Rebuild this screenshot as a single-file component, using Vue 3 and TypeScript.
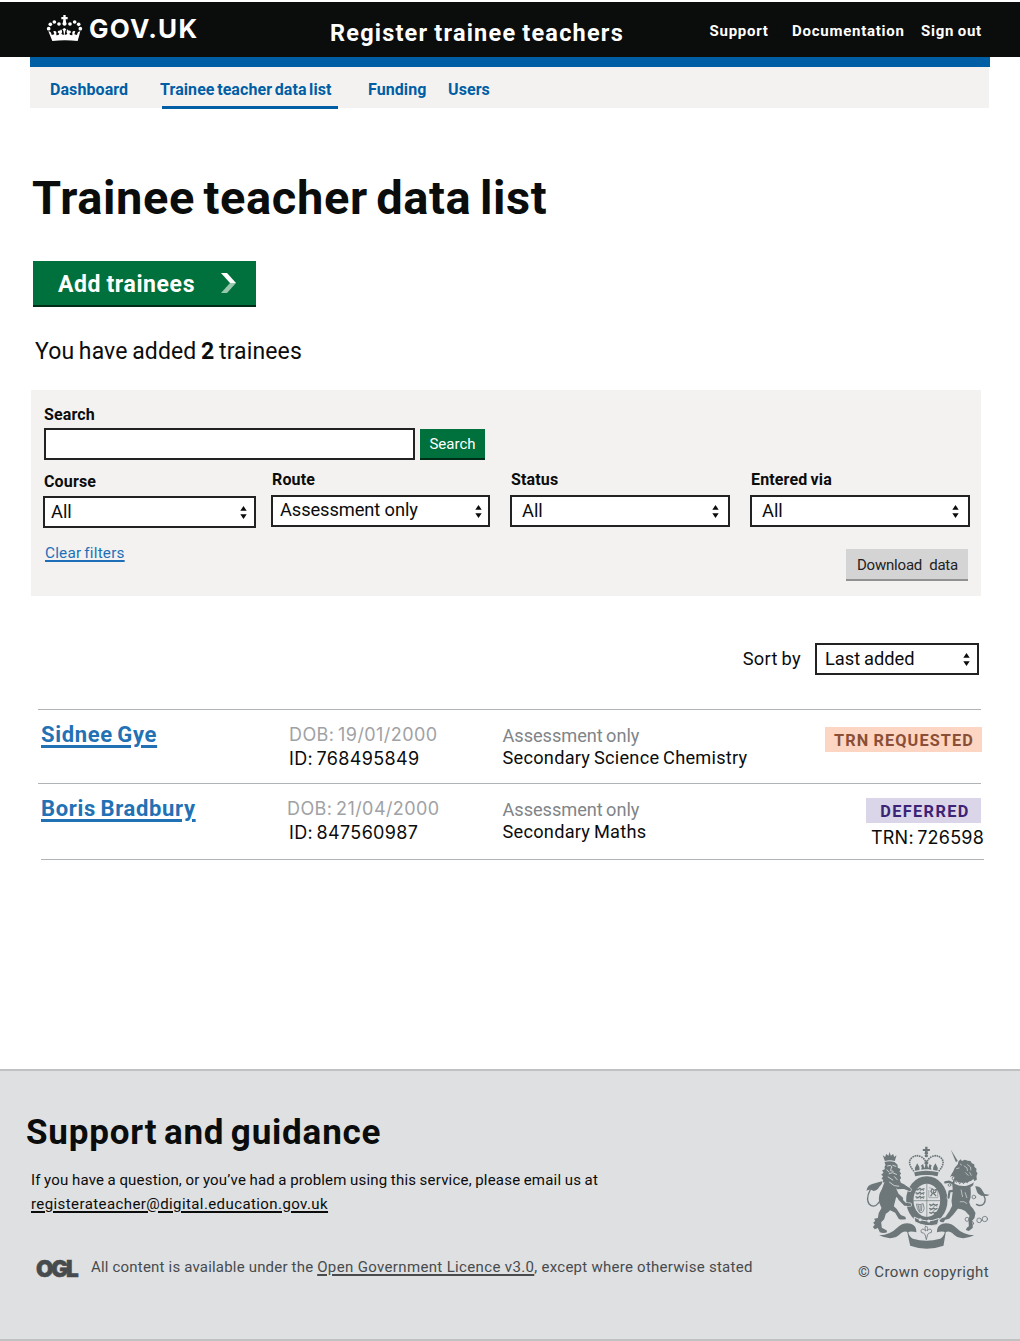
<script setup lang="ts">
import { ref } from 'vue'

interface Trainee {
  name: string
  dob: string
  id: string
  route: string
  course: string
  status: string
  tone: 'orange' | 'purple'
  trn?: string
}

interface Filter {
  key: string
  label: string
  value: string
}

const serviceLinks = ['Support', 'Documentation', 'Sign out']
const navItems = ['Dashboard', 'Trainee teacher data list', 'Funding', 'Users']
const activeNav = ref(1)

const filters: Filter[] = [
  { key: 'course', label: 'Course', value: 'All' },
  { key: 'route', label: 'Route', value: 'Assessment only' },
  { key: 'status', label: 'Status', value: 'All' },
  { key: 'via', label: 'Entered via', value: 'All' },
]

const trainees: Trainee[] = [
  {
    name: 'Sidnee Gye',
    dob: '19/01/2000',
    id: '768495849',
    route: 'Assessment only',
    course: 'Secondary Science Chemistry',
    status: 'TRN REQUESTED',
    tone: 'orange',
  },
  {
    name: 'Boris Bradbury',
    dob: '21/04/2000',
    id: '847560987',
    route: 'Assessment only',
    course: 'Secondary Maths',
    status: 'DEFERRED',
    tone: 'purple',
    trn: '726598',
  },
]
</script>

<template>
  <div class="page">
    <header class="masthead">
      <svg class="crown" viewBox="18 12 111 84" aria-hidden="true">
        <g fill="#fff">
          <path d="M70 15h7v6h6v7h-6l2 15q-5 4-11 0l2-15h-6v-7h6z" />
          <circle cx="73.500" cy="41" r="6" />
          <circle cx="57" cy="42" r="5.500" />
          <circle cx="43" cy="36" r="5.500" />
          <circle cx="31" cy="43" r="5.500" />
          <circle cx="26" cy="56" r="5.500" />
          <circle cx="90" cy="42" r="5.500" />
          <circle cx="104" cy="36" r="5.500" />
          <circle cx="116" cy="43" r="5.500" />
          <circle cx="121" cy="56" r="5.500" />
          <path d="M25 64q9 1 10 11l8-2-3-9q6-3 9 2v10q8 0 9-5l-5-4q0-6 7-5l3-4 3 4q1 6-2 9 3 4 8 3l-2-12-3-4 6-4 6 4-3 4-2 12q5 1 8-3-3-3-2-9l3-4 3 4q7-1 7 5l-5 4q1 5 9 5V66q3-5 9-2l-3 9 8 2q1-10 10-11l-8 29q-38-5-76 0z" />
        </g>
      </svg>
      <span class="logo-text">GOV.UK</span>
      <span class="service-name">Register trainee teachers</span>
      <a v-for="link in serviceLinks" :key="link" class="service-link">{{ link }}</a>
    </header>

    <div class="brand-bar"></div>
    <nav class="nav">
      <a
        v-for="(item, i) in navItems"
        :key="item"
        class="nav-item"
        :class="{ active: i === activeNav }"
        @click="activeNav = i"
      >{{ item }}</a>
    </nav>

    <main class="main">
      <h1 class="title">Trainee teacher data list</h1>

      <button class="add">
        <span>Add trainees</span>
        <svg class="chevron" viewBox="0 0 17 20" aria-hidden="true">
          <path d="M1 0h6l9 10h-6z" fill="#fff" />
          <path d="M10 10h6L7 20H1z" fill="#99c7ae" />
        </svg>
      </button>

      <p class="count">You have added <b>2</b> trainees</p>

      <section class="panel">
        <label class="label">Search</label>
        <div class="search-row">
          <input class="search-input" type="text" />
          <button class="search-btn">Search</button>
        </div>

        <div class="filters">
          <div v-for="f in filters" :key="f.key" class="filter" :class="f.key">
            <span class="label">{{ f.label }}</span>
            <div class="select">
              <span class="value">{{ f.value }}</span>
              <svg class="arrows" viewBox="0 0 7 13" aria-hidden="true">
                <path d="M3.500 0L6.700 4.800H.3zM3.500 13L6.700 8.200H.3z" fill="#0b0c0c" />
              </svg>
            </div>
          </div>
        </div>

        <div class="panel-actions">
          <a class="clear">Clear filters</a>
          <button class="download">Download&nbsp; data</button>
        </div>
      </section>

      <div class="sort">
        <span class="sort-label">Sort by</span>
        <div class="select">
          <span class="value">Last added</span>
          <svg class="arrows" viewBox="0 0 7 13" aria-hidden="true">
            <path d="M3.500 0L6.700 4.800H.3zM3.500 13L6.700 8.200H.3z" fill="#0b0c0c" />
          </svg>
        </div>
      </div>

      <div class="list">
        <article v-for="t in trainees" :key="t.id" class="row" :class="t.tone">
          <div class="who"><a class="name">{{ t.name }}</a></div>
          <div class="ids">
            <div class="dob">DOB: {{ t.dob }}</div>
            <div class="id">ID: {{ t.id }}</div>
          </div>
          <div class="programme">
            <div class="route-name">{{ t.route }}</div>
            <div class="course-name">{{ t.course }}</div>
          </div>
          <div class="state">
            <span class="tag">{{ t.status }}</span>
            <span v-if="t.trn" class="trn">TRN: {{ t.trn }}</span>
          </div>
        </article>
      </div>
      <div class="list-end"></div>
    </main>

    <footer class="footer">
      <div class="support">
        <h2 class="support-title">Support and guidance</h2>
        <p class="question">If you have a question, or you’ve had a problem using this service, please email us at</p>
        <p class="email-line"><a class="email">registerateacher@digital.education.gov.uk</a></p>
        <div class="licence">
          <span class="ogl">OGL</span>
          <p class="licence-text"><span class="lead">All content is available under the </span><a class="licence-link">Open Government Licence v3.0</a><span class="tail">, except where otherwise stated</span></p>
        </div>
      </div>
      <div class="crest">
        <svg class="arms" viewBox="15 15 380 315" aria-hidden="true">
          <g fill="#6d7779" stroke="#6d7779" stroke-linejoin="round" stroke-linecap="round">
            <!-- imperial crown -->
            <g stroke="none">
              <path d="M195 20h7v7h7v6h-7l2 9h-11l2-9h-7v-6h7z" />
              <circle cx="198.500" cy="47" r="5" />
              <path d="M162 97q36-9 73 0l-3 12q-34-8-67 0z" />
              <path d="M165 92q-3-9 2-14l4-8 5 8q3 5 2 12zM183 89l2-8-3-4 7-5 2 8 3 8zM232 92q3-9-2-14l-4-8-5 8q-3 5-2 12zM214 89l-2-8 3-4-7-5-2 8-3 8zM192 88l4-14-4-5 6.500-8 6.500 8-4 5 4 14z" />
            </g>
            <path d="M160 92q-20-24-6-38 14-12 30-3 10 6 12 14M237 92q20-24 6-38-14-12-30-3-10 6-12 14" fill="none" stroke-width="5.500" stroke-dasharray=".1 6.800" />
            <!-- motto scroll -->
            <g stroke="none">
              <path d="M57 286q34-2 54-23 18-17 41-12 17 5 17 26-17-5-26 0-10-6-20 2-24 27-66 7z" />
              <path d="M342 286q-34-2-54-23-18-17-41-12-17 5-17 26 17-5 26 0 10-6 20 2 24 27 66 7z" />
              <path d="M144 275q2 14 14 21 40 12 82 0 12-7 14-21h3l-7 42q-50 18-100 0l-9-42z" />
            </g>
            <path d="M170 250h58v45q-29 6-58 0z" fill="#dee0e2" stroke="none" />
            <path d="M198.500 256l4 9-2 8q10-11 14-1 1 8-7 7l-5 4-4 16-4-16-5-4q-8 1-7-7 4-10 14 1l-2-8z" fill="#dee0e2" stroke-width="2.500" />
            <!-- garter and quartered shield -->
            <ellipse cx="200" cy="181" rx="66" ry="76" fill="#dee0e2" stroke="none" />
            <ellipse cx="200" cy="181" rx="51" ry="61" fill="#dee0e2" stroke-width="22" />
            <path d="M163 232q36 20 74 3l-5 19q-36 9-67-8z" stroke="#dee0e2" stroke-width="3" />
            <circle cx="180" cy="239" r="4.500" fill="#dee0e2" stroke="none" />
            <circle cx="206" cy="243" r="4.500" fill="#dee0e2" stroke="none" />
            <g fill="none" stroke-linecap="butt">
              <path d="M159 182h82M200 132v100" stroke-width="2" />
              <path d="M166 146l8 3 5-4 5 4 9-3M166 158l8 3 5-4 5 4 9-3M166 170l8 3 5-4 5 4 9-3M207 193l8 3 5-4 5 4 8-3M207 205l8 3 5-4 5 4 7-3M207 217l7 3 5-4 4 4 5-3" stroke-width="4" />
              <path d="M169 151h3M179 152h3M188 151h3M169 163h3M179 164h3M188 163h3M169 175h3M179 176h3M188 175h3M210 198h3M220 199h3M228 198h3M210 210h3M220 211h3" stroke-width="3" />
              <path d="M206 143l9 2M206 150v22M233 149v24M206 173h27" stroke-width="1.500" />
              <path d="M211 169l6-9-5-6 4-8 6 5 7-3-3 9-6 3 8 8M219 152l3 12" stroke-width="3.500" />
              <path d="M169 192q11 4 20-1l3 14q-4 17-14 12-8-9-9-25zM174 195l4 20M180 195v20M185 194l-1 19" stroke-width="2.300" />
            </g>
            <!-- lion -->
            <path d="M112 143l24-1 12 7M118 176l17 17 14 1" fill="none" stroke="#dee0e2" stroke-width="13" />
            <path d="M112 143l24-1 12 7M118 176l17 17 14 1" fill="none" stroke-width="9" />
            <g stroke="none">
              <path d="M68 46l7 5 3-9 7 5 3-11 4 11 7-5 3 9 7-5-5 17q-15-4-30 0z" />
              <path d="M73 66q15-4 30 0l9 8 1 9 8 4-3 8 5 5-4 6 4 8-4 5 3 9q12 3 20 14l-3 8-12-5-10-4-10 2 8 18q10 8 14 13l-1 10q-10-4-20-13l-7 28q8 6 13 15l8 11 13 5 3 7q-12 3-22 0l-11-19-15-7q-6 7-13 10l-5 17-9 9 2 16 14 8 2 6q-11 4-22 0l-6-13-9 4-6-7 6-7-5-6 6-5-3-7 11-2q1-17 11-30l-6-14q-6-22 7-42l8-22-5 2 1-9-5-3 5-7-6-5 7-6-4-7 8-3q-3-7 2-13z" />
              <path d="M19 152q2-16 17-20l24-7 7-1q0 9-10 17-5 11-17 12-10-7-21-1z" />
            </g>
            <path d="M30 150q-14 26-3 42 13 14 27-2 8-8 4-15" fill="none" stroke-width="4" />
            <g fill="none" stroke="#dee0e2" stroke-width="2.500">
              <path d="M82 78l9-2 4 5M98 76l9 3M94 82l-3 10 8 2M87 101l10-3 12 5M80 90l7 6M84 111l14 9M103 110l8 9M88 127q14 14 28 12" />
            </g>
            <!-- unicorn -->
            <path d="M292 136l-25-11-12 2M294 150l-26 4-3 19" fill="none" stroke="#dee0e2" stroke-width="11" />
            <path d="M292 136l-25-11-12 2M294 150l-26 4-3 19" fill="none" stroke-width="6.500" />
            <path d="M272 29l21 34-6 3z" stroke="none" />
            <g stroke="none">
              <path d="M280 92l4-9 9-10 2-9 7-6 3 5 9-4 9 3 8 1 4 7 7 3 1 8 6 5-1 8 4 6-3 8 1 11-9 5-2 12-8 6q2 18 0 32l-4 12q2 12 12 20l7 13-3 15-7 8 2 21-12 10-9-3 3-7 6-4-1-20 3-12-13-14q-14-8-22-7l-14 18-12 12-12 3-5 8-9-1-3-5 8-7 9-2 13-19 8-16-2-14 4-30-2-24 8-18-9-3-6 4z" />
              <path d="M345 139q15-1 22 13l6 10 15 2-7 4-18-1q-12-5-14-16z" />
            </g>
            <path d="M366 160q15 17 5 31-10 10-22 2" fill="none" stroke-width="4" />
            <path d="M284 120q28 18 56-3l3 8q-29 23-60 6z" fill="#dee0e2" stroke="none" />
            <path d="M284 118l4 9 6-5 4 9 7-6 5 6 6-7 6 4 3-8 7 2 2-8" fill="none" stroke-width="3" />
            <g fill="none" stroke="#dee0e2" stroke-width="2">
              <path d="M289 86l8-2M300 72l4 3M312 78l8 5 2 9M322 74l9 7 1 9M316 98l8 8M329 98l4 8M303 150l4 20M300 185q12-3 20 5M315 158l5 15" />
            </g>
            <g fill="none" stroke-width="2.500">
              <circle cx="281" cy="115" r="5" /><circle cx="268" cy="135" r="4" />
              <circle cx="341" cy="171" r="5.500" /><circle cx="321" cy="238" r="6" />
              <circle cx="334" cy="250" r="6" /><circle cx="357" cy="241" r="7" /><circle cx="374" cy="237" r="8" />
            </g>
          </g>
        </svg>
        <span class="copyright">© Crown copyright</span>
      </div>
    </footer>
  </div>
</template>

<style>
body {
  margin: 0;
  background: #fff;
}
</style>

<style scoped>
.page {
  width: 1020px;
  height: 1341px;
  overflow: hidden;
  box-sizing: border-box;
  padding-top: 2px;
  font-family: Roboto, 'Liberation Sans', sans-serif;
  color: #0b0c0c;
  display: flex;
  flex-direction: column;
}
h1, h2, p { margin: 0; }
button { border: 0; padding: 0; font-family: inherit; }
a { cursor: pointer; }
a, span, h1, h2, p, .dob, .id, .route-name, .course-name { white-space: nowrap; }

.masthead {
  height: 55px;
  flex: none;
  background: #0b0c0c;
  color: #fff;
  display: grid;
  grid-template-columns: 43px 241px 379.5px 82.5px 129px 89px;
  padding-left: 46px;
  font-weight: 700;
}
.crown { width: 37px; height: 28px; margin-top: 12px; }
.logo-text {
  font: 700 26px/30px Inter, sans-serif;
  letter-spacing: 1.25px;
  margin-top: 12px;
}
.service-name { font-size: 23.5px; line-height: 28px; letter-spacing: 1.2px; word-spacing: -1px; margin-top: 17px; }
.service-link { font-size: 15px; line-height: 20px; letter-spacing: 0.75px; word-spacing: -1px; margin-top: 19px; }

.brand-bar { flex: none; width: 960px; height: 10px; margin-left: 30px; background: #005ea5; }
.nav {
  flex: none;
  width: 959px;
  height: 41px;
  margin-left: 30px;
  box-sizing: border-box;
  background: #f3f2f1;
  padding-left: 20px;
  display: grid;
  grid-template-columns: 110px 208px 80px 80px;
}
.nav-item {
  color: #005ea5;
  font-size: 16px;
  line-height: 20px;
  font-weight: 700;
  letter-spacing: 0.08px;
  word-spacing: -1.5px;
  padding-top: 13px;
}
.nav-item.active {
  width: 176px;
  height: 26px;
  margin-left: 2px;
  border-bottom: 3px solid #005ea5;
  text-indent: -2px;
}

.main { flex: none; height: 961px; display: flex; flex-direction: column; }
.title {
  font-size: 47px;
  line-height: 56px;
  font-weight: 700;
  letter-spacing: 0.62px;
  word-spacing: -3.8px;
  margin: 62px 0 0 32px;
}
.add {
  width: 223px;
  height: 46px;
  box-sizing: border-box;
  margin: 35px 0 0 33px;
  padding: 0 19px 0 25px;
  display: flex;
  align-items: center;
  justify-content: space-between;
  background: #00703c;
  border-bottom: 2px solid #002d18;
  color: #fff;
  font-size: 23px;
  font-weight: 700;
  letter-spacing: 0.6px;
  word-spacing: -1px;
}
.add span { padding-top: 2px; }
.chevron { width: 17px; height: 20px; }
.count { font-size: 23px; line-height: 28px; margin: 31px 0 0 35px; letter-spacing: 0.12px; word-spacing: -1.2px; }

.panel {
  width: 950px;
  height: 206px;
  box-sizing: border-box;
  margin: 24px 0 0 31px;
  background: #f3f2f1;
  padding: 15px 0 0 12px;
}
.label { display: block; font-size: 16px; line-height: 20px; font-weight: 700; letter-spacing: 0.15px; word-spacing: -1px; padding-left: 1px; }
.search-row { display: flex; gap: 5px; margin: 3px 0 0 1px; align-items: flex-end; }
.search-input {
  width: 371px;
  height: 32px;
  box-sizing: border-box;
  border: 2px solid #222;
  border-radius: 0;
  background: #fff;
  outline: none;
}
.search-btn {
  width: 65px;
  height: 31px;
  box-sizing: border-box;
  border-bottom: 2px solid #002d18;
  background: #00703c;
  color: #fff;
  font-size: 15px;
}
.filters {
  display: grid;
  grid-template-columns: 228px 239px 240px 220px;
  margin-top: 10px;
}
.filter { display: flex; flex-direction: column; gap: 5px; }
.filter.course { padding-top: 2px; gap: 4px; }
.select {
  width: 220px;
  height: 32px;
  box-sizing: border-box;
  border: 2px solid #222;
  background: #fff;
  display: flex;
  align-items: center;
  justify-content: space-between;
  font-size: 18.3px;
  line-height: 28px;
  padding: 0 9px 0 10px;
}
.course .select { width: 213px; padding: 0 7px 0 6px; }
.route .select { width: 219px; padding: 0 6px 0 7px; }
.route .value { margin-top: -2px; letter-spacing: -0.1px; }
.arrows { width: 7px; height: 13px; }
.panel-actions {
  display: flex;
  justify-content: space-between;
  padding: 0 13px 0 2px;
  margin-top: 15px;
}
.clear {
  font-size: 15.3px;
  line-height: 20px;
  letter-spacing: 0.2px;
  word-spacing: -1px;
  color: #1d70b8;
  text-decoration: underline 1.5px;
  text-underline-offset: 2px;
}
.download {
  width: 122px;
  height: 32px;
  margin-top: 6px;
  box-sizing: border-box;
  border-bottom: 2px solid #929191;
  background: #d5d4d4;
  color: #222;
  font-size: 15px;
  letter-spacing: -0.2px;
  padding: 2px 0 0 1px;
}

.sort {
  display: flex;
  justify-content: flex-end;
  align-items: center;
  margin: 47px 41px 0 0;
  font-size: 18.3px;
}
.sort-label { margin: -2px 14px 0 0; letter-spacing: 0.3px; word-spacing: -1px; }
.sort .select { width: 164px; padding: 0 7px 0 8px; }
.sort .value { word-spacing: -0.8px; }

.list { margin: 34px 0 0 38px; width: 943px; }
.row {
  display: grid;
  grid-template-columns: 251px 213.5px 1fr auto;
  height: 73px;
  border-top: 1px solid #b1b4b6;
}
.row.purple { height: 75px; }
.name {
  display: inline-block;
  margin: 12px 0 0 3px;
  font-size: 22px;
  line-height: 26px;
  font-weight: 700;
  letter-spacing: 0.65px;
  word-spacing: -1.5px;
  color: #2271b5;
  text-decoration: underline 3px;
  text-underline-offset: 3px;
}
.ids { font: 18px/24px Inter, sans-serif; letter-spacing: 0.33px; word-spacing: -1.8px; padding-top: 13px; }
.dob { color: #a0a2a5; letter-spacing: 0.42px; }
.purple .dob { margin-left: -2px; }
.programme { font-size: 18.2px; line-height: 22px; padding-top: 15px; letter-spacing: 0.25px; word-spacing: -1px; }
.route-name { color: #808488; letter-spacing: -0.05px; }
.state { display: flex; flex-direction: column; align-items: flex-end; }
.tag {
  box-sizing: border-box;
  height: 25px;
  width: 157px;
  margin: 17px -1px 0 0;
  font-size: 16.3px;
  line-height: 27px;
  font-weight: 700;
  letter-spacing: 1.1px;
  word-spacing: -1px;
  text-indent: 1px;
  text-align: center;
  background: #fcd6c3;
  color: #8a4f36;
}
.purple .tag {
  width: 115px;
  margin: 14px 0 0;
  background: #dbd5e9;
  color: #3d2375;
  letter-spacing: 1.4px;
  text-indent: 3px;
}
.trn { font: 18px/22px Inter, sans-serif; letter-spacing: 0.2px; word-spacing: -1.8px; margin: 4px -3px 0 0; }
.list-end { width: 943px; height: 1px; flex: none; margin-left: 41px; background: #b1b4b6; }

.footer {
  flex: none;
  height: 272px;
  box-sizing: border-box;
  border-top: 2px solid #bfc1c3;
  border-bottom: 2px solid #bfc1c3;
  background: #dee0e2;
  display: flex;
  justify-content: space-between;
}
.support-title {
  font-size: 35px;
  line-height: 42px;
  font-weight: 700;
  letter-spacing: 0.8px;
  word-spacing: -3px;
  margin: 41px 0 0 26px;
}
.question { font-size: 15px; line-height: 20px; letter-spacing: 0.2px; word-spacing: -0.5px; margin: 16px 0 0 31px; }
.email-line { font-size: 15px; line-height: 20px; margin: 4px 0 0 31px; }
.email { letter-spacing: 0.41px; text-decoration: underline 2px; text-underline-offset: 2px; }
.licence { display: flex; margin: 43px 0 0 36px; color: #484b4d; }
.ogl {
  width: 55px;
  font: 900 22.5px/20px Inter, sans-serif;
  letter-spacing: -2.2px;
  -webkit-text-stroke: 0.5px #484b4d;
  padding-top: 2px;
}
.licence-text { font-size: 15px; line-height: 20px; }
.lead { letter-spacing: 0.19px; }
.licence-link { letter-spacing: 0.35px; text-decoration: underline 2px; text-underline-offset: 2px; }
.tail { letter-spacing: 0.26px; }
.crest { display: flex; flex-direction: column; align-items: flex-end; padding: 74px 31px 0 0; }
.arms { width: 127px; height: 105px; margin-right: -3px; }
.copyright { font-size: 15px; line-height: 20px; letter-spacing: 0.4px; margin-top: 12px; color: #484b4d; }
</style>
